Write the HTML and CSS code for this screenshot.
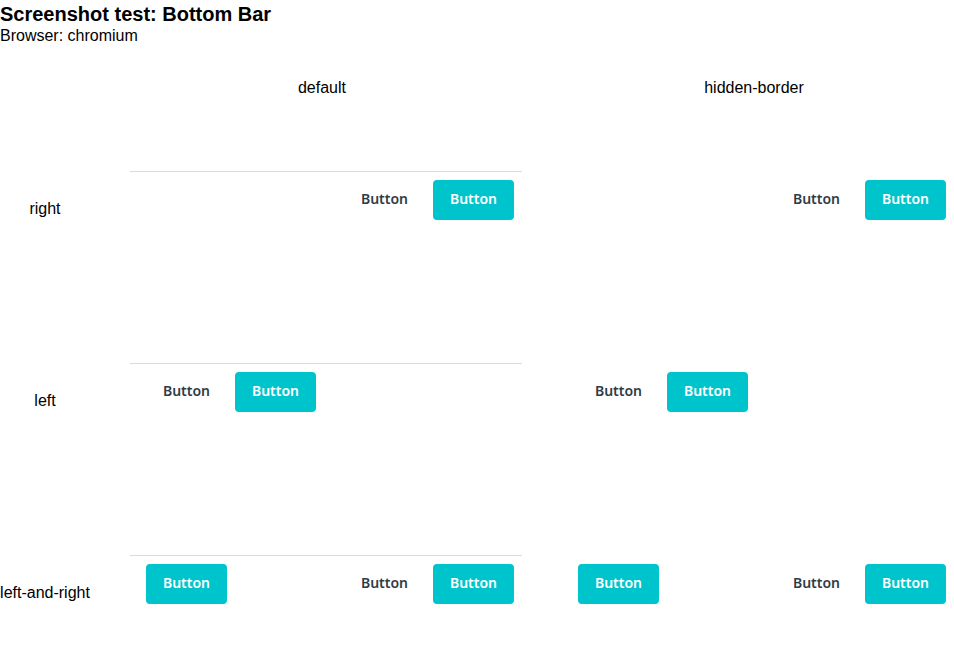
FILE: index.html
```html
<!DOCTYPE html>
<html>
<head>
<meta charset="utf-8">
<link rel="stylesheet" href="styles.css">
</head>
<body>
<h1 class="title">Screenshot test: Bottom Bar</h1>
<p class="browser">Browser: chromium</p>
<div class="grid">
  <div class="head"></div>
  <div class="head">default</div>
  <div class="head">hidden-border</div>

  <div class="label">right</div>
  <div class="cell cell-default">
    <div class="bar bar-right">
      <button class="btn btn-ghost">Button</button>
      <button class="btn btn-primary">Button</button>
    </div>
  </div>
  <div class="cell cell-hidden">
    <div class="bar bar-right bar-hidden">
      <button class="btn btn-ghost">Button</button>
      <button class="btn btn-primary">Button</button>
    </div>
  </div>

  <div class="label">left</div>
  <div class="cell cell-default">
    <div class="bar bar-left">
      <button class="btn btn-ghost">Button</button>
      <button class="btn btn-primary">Button</button>
    </div>
  </div>
  <div class="cell cell-hidden">
    <div class="bar bar-left bar-hidden">
      <button class="btn btn-ghost">Button</button>
      <button class="btn btn-primary">Button</button>
    </div>
  </div>

  <div class="label">left-and-right</div>
  <div class="cell cell-default">
    <div class="bar bar-both">
      <button class="btn btn-primary">Button</button>
      <div class="group">
        <button class="btn btn-ghost">Button</button>
        <button class="btn btn-primary">Button</button>
      </div>
    </div>
  </div>
  <div class="cell cell-hidden">
    <div class="bar bar-both bar-hidden">
      <button class="btn btn-primary">Button</button>
      <div class="group">
        <button class="btn btn-ghost">Button</button>
        <button class="btn btn-primary">Button</button>
      </div>
    </div>
  </div>
</div>
</body>
</html>
```
FILE: styles.css
```css
html, body {
  margin: 0;
  padding: 0;
  background: #ffffff;
}
body {
  font-family: "Liberation Sans", Arial, sans-serif;
  color: #000;
  width: 954px;
}
.title {
  margin: 2px 0 0 0;
  font-size: 20px;
  font-weight: bold;
  line-height: 24px;
}
.browser {
  margin: 1px 0 0 0;
  font-size: 16px;
  line-height: 18px;
}
.grid {
  display: grid;
  grid-template-columns: 90px 464px 400px;
  grid-template-rows: 23px 192px 192px 192px;
  margin-top: 32px;
}
.head {
  font-size: 16px;
  line-height: 18px;
  text-align: center;
  padding-top: 2px;
}
.label {
  font-size: 16px;
  line-height: 18px;
  text-align: center;
  padding-top: 100px;
  white-space: nowrap;
}
.cell {
  padding-top: 71px;
}
.cell-default {
  padding-left: 40px;
}
.cell-hidden {
  padding-left: 8px;
}
.bar {
  width: 392px;
  box-sizing: border-box;
  display: flex;
  align-items: center;
  gap: 8px;
  padding: 8px 8px 8px 16px;
  border-top: 1px solid #d3dbe2;
}
.bar-hidden {
  border-top-color: transparent;
}
.bar-right {
  justify-content: flex-end;
}
.bar-left {
  justify-content: flex-start;
}
.bar-both {
  justify-content: space-between;
}
.group {
  display: flex;
  gap: 8px;
}
.btn {
  box-sizing: border-box;
  height: 40px;
  width: 81px;
  padding: 0 0 3px 0;
  border: none;
  border-radius: 4px;
  font-family: "Noto Sans", sans-serif;
  font-size: 14px;
  font-weight: 600;
  cursor: pointer;
}
.btn-primary {
  background: #00c4cc;
  color: #ffffff;
}
.btn-ghost {
  background: transparent;
  color: #2f3b47;
}
```
